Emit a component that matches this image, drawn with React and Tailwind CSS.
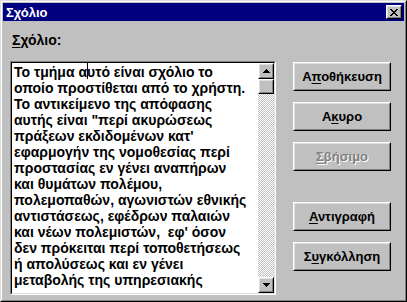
import React from "react";

const lines = [
  "Το τμήμα αυτό είναι σχόλιο το",
  "οποίο προστίθεται από το χρήστη.",
  "Το αντικείμενο της απόφασης",
  "αυτής είναι \"περί ακυρώσεως",
  "πράξεων εκδιδομένων κατ'",
  "εφαρμογήν της νομοθεσίας περί",
  "προστασίας εν γένει αναπήρων",
  "και θυμάτων πολέμου,",
  "πολεμοπαθών, αγωνιστών εθνικής",
  "αντιστάσεως, εφέδρων παλαιών",
  "και νέων πολεμιστών,  εφ' όσον",
  "δεν πρόκειται περί τοποθετήσεως",
  "ή απολύσεως και εν γένει",
  "μεταβολής της υπηρεσιακής",
];

// classic raised 3d box
const Raised = ({ className = "", children }) => (
  <div className={`border border-white border-r-black border-b-black ${className}`}>
    <div className="w-full h-full border border-[#dfdfdf] border-r-[#808080] border-b-[#808080] flex items-center justify-center">
      {children}
    </div>
  </div>
);

const Button = ({ before = "", hot, after = "", disabled }) => (
  <Raised className="w-[98px] h-[29px] bg-[#c0c0c0]">
    <span
      className={`text-[13px] font-bold whitespace-pre ${
        disabled ? "text-[#808080] [text-shadow:1px_1px_0_#fff]" : "text-black"
      }`}
    >
      {before}
      <span className="underline underline-offset-2">{hot}</span>
      {after}
    </span>
  </Raised>
);

const Arrow = ({ up }) => (
  <svg width="7" height="4" viewBox="0 0 7 4">
    {up ? (
      <path d="M3 0h1v1h1v1h1v1h1v1H0V3h1V2h1V1h1z" fill="#000" />
    ) : (
      <path d="M0 0h7v1H6v1H5v1H4v1H3V3H2V2H1V1H0z" fill="#000" />
    )}
  </svg>
);

export default function App() {
  return (
    <div className="w-[407px] h-[302px] border border-[#dfdfdf] border-r-black border-b-black bg-[#c0c0c0] font-['Liberation_Sans',Arial,sans-serif] select-none">
      <div className="h-full border border-white border-r-[#808080] border-b-[#808080] p-px flex flex-col">
        {/* title bar */}
        <div className="h-[18px] bg-[#000080] flex items-center justify-between pl-[3px] pr-[2px]">
          <span className="text-white text-[13px] font-bold leading-none">Σχόλιο</span>
          <Raised className="w-[16px] h-[14px] bg-[#c0c0c0]">
            <svg width="8" height="7" viewBox="0 0 8 7">
              <path
                d="M0 0h2v1h1v1h2V1h1V0h2v1H7v1H6v1H5v1h1v1h1v1h1v1H6V6H5V5H3v1H2v1H0V6h1V5h1V4h1V3H2V2H1V1H0z"
                fill="#000"
              />
            </svg>
          </Raised>
        </div>

        {/* body */}
        <div className="flex flex-1">
          <div className="pl-[7px] w-[273px] flex flex-col">
            <div className="mt-[11px] h-[16px] leading-4 text-[14px] font-bold pl-[2px]">
              <span className="underline underline-offset-2">Σ</span>χόλιο:
            </div>
            <div className="mt-[13px] w-[266px] h-[234px] border border-[#808080] border-r-white border-b-white">
              <div className="w-full h-full border border-black border-r-[#dfdfdf] border-b-[#dfdfdf] bg-white flex">
                <div className="flex-1 pl-[2px] pt-[1px] text-[14px] font-bold leading-4 text-black overflow-hidden">
                  {lines.map((l, i) =>
                    i === 0 ? (
                      <div key={i} className="whitespace-pre">
                        Το τμήμα α
                        <span className="relative">
                          <span className="absolute left-0 top-[-2px] w-px h-[17px] bg-black" />
                        </span>
                        υτό είναι σχόλιο το
                      </div>
                    ) : (
                      <div key={i} className="whitespace-pre">
                        {l}
                      </div>
                    )
                  )}
                </div>
                <div className="w-[16px] flex flex-col">
                  <Raised className="w-[16px] h-[16px] bg-[#c0c0c0]">
                    <Arrow up />
                  </Raised>
                  <Raised className="w-[16px] h-[15px] bg-[#c0c0c0]" />
                  <div className="flex-1 bg-[repeating-conic-gradient(#c0c0c0_0_25%,#fff_0_50%)] bg-[length:2px_2px]" />
                  <Raised className="w-[16px] h-[16px] bg-[#c0c0c0]">
                    <Arrow />
                  </Raised>
                </div>
              </div>
            </div>
          </div>

          <div className="ml-[17px] pt-[41px] flex flex-col">
            <Button before="Α" hot="π" after="οθήκευση" />
            <div className="mt-[11px]">
              <Button before="Α" hot="κ" after="υρο" />
            </div>
            <div className="mt-[11px]">
              <Button hot="Σ" after="βήσιμο" disabled />
            </div>
            <div className="mt-[31px]">
              <Button hot="Α" after="ντιγραφή" />
            </div>
            <div className="mt-[11px]">
              <Button before="Σ" hot="υ" after="γκόλληση" />
            </div>
          </div>
        </div>
      </div>
    </div>
  );
}
